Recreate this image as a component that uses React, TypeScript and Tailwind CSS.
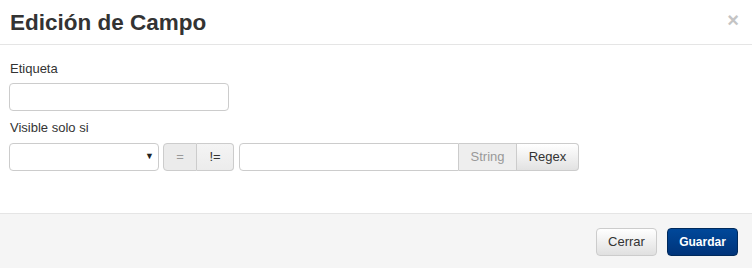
import React from "react";

export default function App() {
  const font = { fontFamily: '"Liberation Sans", Arial, sans-serif' };
  return (
    <div className="w-[752px] h-[268px] bg-white flex flex-col text-[#333] text-[13px]" style={font}>
      <div className="h-[45px] shrink-0 border-b border-[#e5e5e5] flex items-center justify-between pl-[10px] pr-[13px]">
        <h4 className="text-[22.5px] font-bold leading-none mt-[2px]">Edición de Campo</h4>
        <span className="text-[#c4c4c4] text-[20px] font-bold leading-none -mt-[4px]">×</span>
      </div>
      <div className="flex-1 pt-[15px] px-[9px]">
        <div className="h-[18px] leading-[18px] pl-[1px]">Etiqueta</div>
        <div className="mt-[5px] w-[220px] h-[28px] border border-[#ccc] rounded-[4px] bg-white" />
        <div className="mt-[8px] h-[18px] leading-[18px] pl-[1px]">Visible solo si</div>
        <div className="mt-[6px] flex items-center h-[28px]">
          <div className="w-[150px] h-[28px] border border-[#ccc] rounded-[4px] bg-white flex items-center justify-end pr-[4px]">
            <span className="text-[9px] text-[#222]">▼</span>
          </div>
          <div className="ml-[4px] flex h-[28px]">
            <div className="w-[34px] h-[28px] border border-[#ccc] rounded-l-[4px] bg-[#ebebeb] flex items-center justify-center text-[#999]">=</div>
            <div className="w-[37px] h-[28px] border border-l-0 border-[#ccc] rounded-r-[4px] bg-gradient-to-b from-[#f4f4f4] to-[#ececec] flex items-center justify-center text-[#333]">!=</div>
          </div>
          <div className="ml-[5px] w-[220px] h-[28px] border border-[#ccc] rounded-l-[4px] bg-white" />
          <div className="w-[58px] h-[28px] border border-l-0 border-[#ccc] bg-[#eee] flex items-center justify-center text-[#999]">String</div>
          <div className="w-[62px] h-[28px] border border-l-0 border-[#ccc] rounded-r-[4px] bg-gradient-to-b from-[#fff] to-[#e2e2e2] flex items-center justify-center text-[#333]">Regex</div>
        </div>
      </div>
      <div className="h-[55px] shrink-0 border-t border-[#e5e5e5] bg-[#f5f5f5] flex items-start justify-end pt-[14px] pr-[14px] gap-[10px]">
        <div className="w-[61px] h-[28px] border border-[#ccc] rounded-[4px] bg-gradient-to-b from-[#fff] to-[#e0e0e0] flex items-center justify-center text-[#333]">Cerrar</div>
        <div className="w-[71px] h-[28px] border border-[#002a5c] rounded-[4px] bg-gradient-to-b from-[#00489a] to-[#00347a] flex items-center justify-center text-[12px] font-bold text-white">Guardar</div>
      </div>
    </div>
  );
}
